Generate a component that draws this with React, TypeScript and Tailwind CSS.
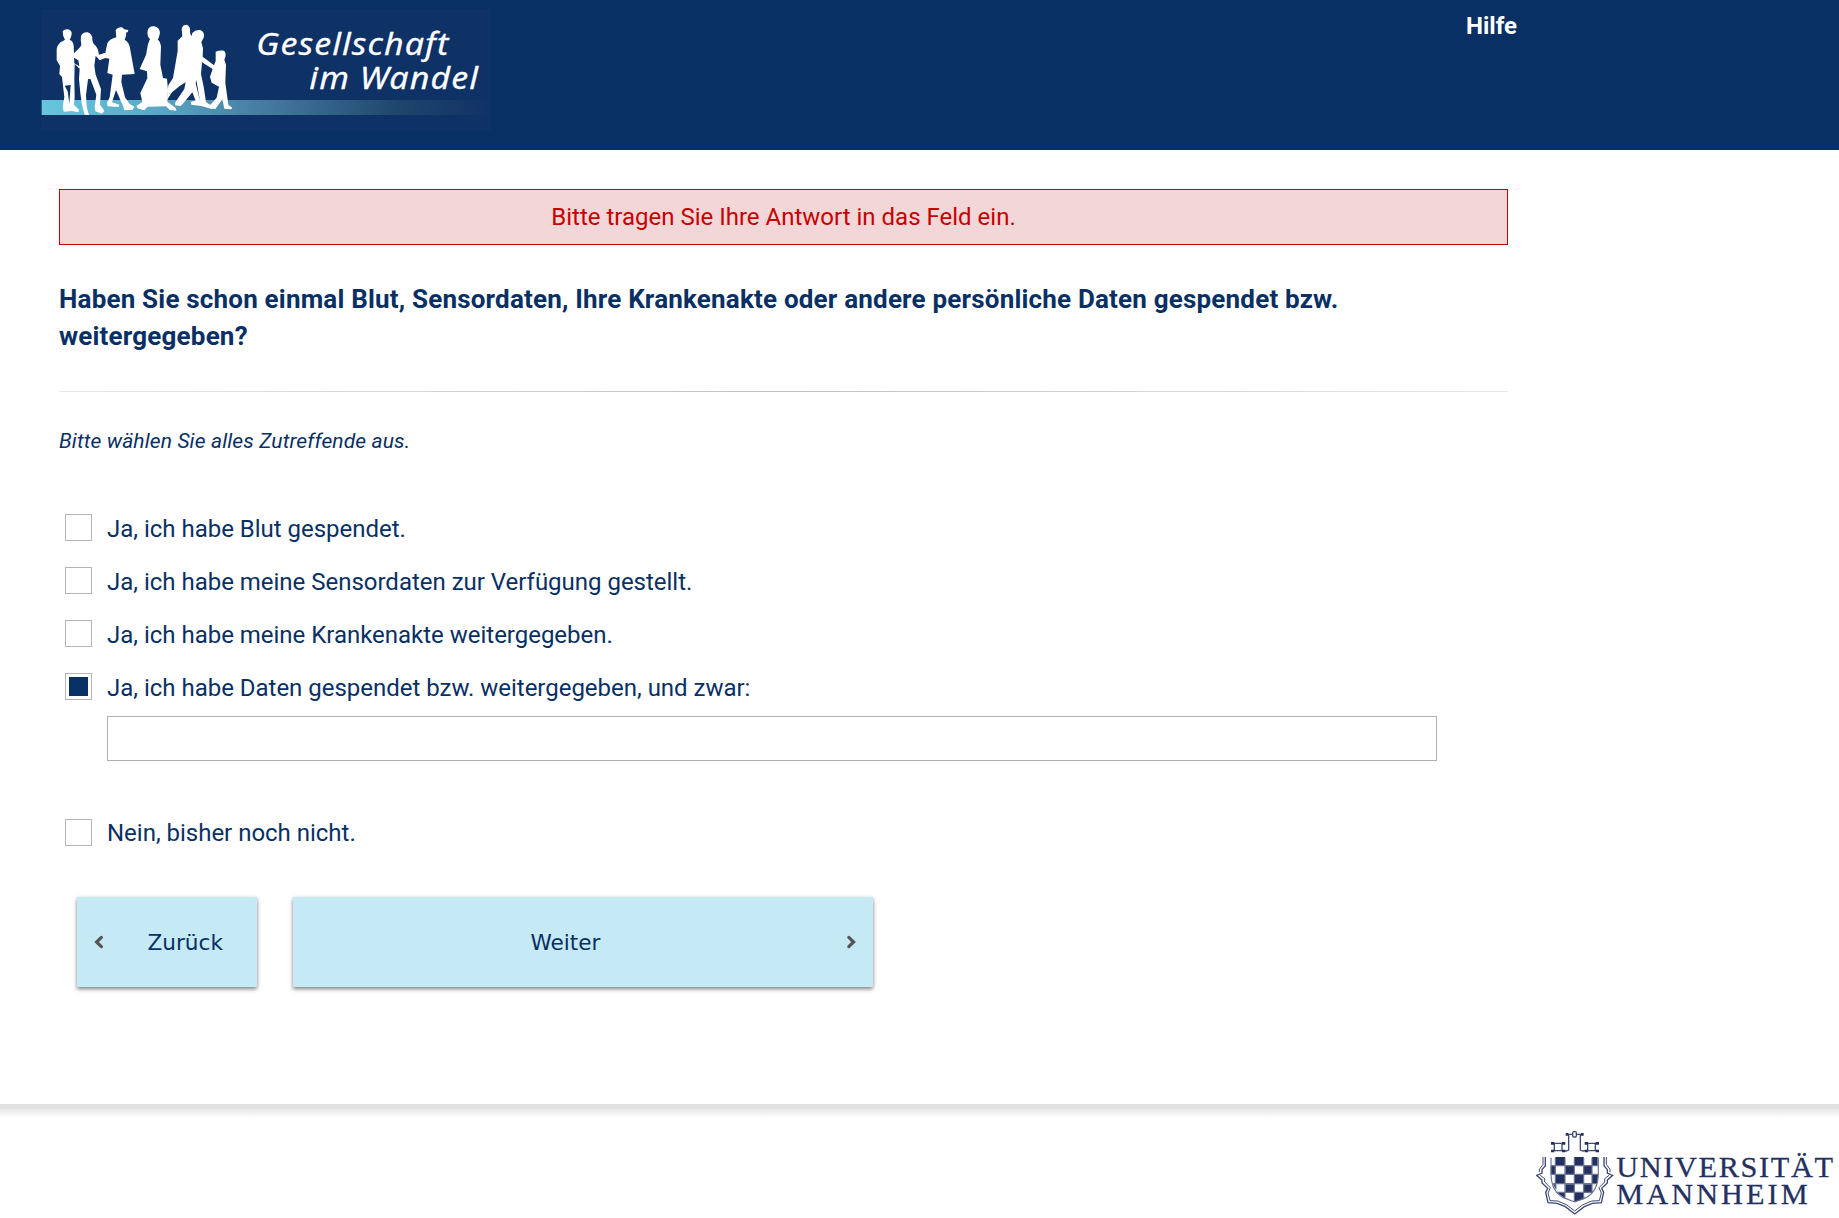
import React from "react";

const options = [
  { label: "Ja, ich habe Blut gespendet.", checked: false },
  { label: "Ja, ich habe meine Sensordaten zur Verfügung gestellt.", checked: false },
  { label: "Ja, ich habe meine Krankenakte weitergegeben.", checked: false },
  { label: "Ja, ich habe Daten gespendet bzw. weitergegeben, und zwar:", checked: true },
];

function Option({ label, checked, compact = false }: { label: string; checked: boolean; compact?: boolean }) {
  return (
    <label className="flex h-[27px] items-start">
      <span className="flex h-[27px] w-[27px] shrink-0 items-center justify-center border border-[#b5b5b5] bg-white">
        {checked && <span className="h-[19px] w-[19px] bg-[#083064]" />}
      </span>
      <span className={`ml-[15px] whitespace-nowrap text-[24px] tracking-[-0.015px] ${compact ? "leading-[28px]" : "leading-[30px]"}`}>
        {label}
      </span>
    </label>
  );
}

function SocietyLogo() {
  return (
    <svg className="block h-[122px] w-[450px]" viewBox="33 27 1350 366" aria-label="Gesellschaft im Wandel">
      <defs>
        <linearGradient id="bar" x1="0" x2="1" y1="0" y2="0">
          <stop offset="0" stopColor="#66c6dd" />
          <stop offset="0.25" stopColor="#5aa9c6" />
          <stop offset="0.5" stopColor="#457a9f" />
          <stop offset="0.8" stopColor="#1e456c" />
          <stop offset="1" stopColor="#103166" />
        </linearGradient>
      </defs>
      <rect x="33" y="27" width="1350" height="366" fill="#0e3166" />
      <rect x="35" y="300" width="1348" height="45" fill="url(#bar)" />
      <g fill="#fff">
        <path d="M98 94Q103 87 114 88Q126 91 125 102Q124 112 119 119Q130 124 131 137L132 160L150 142L154 135Q151 120 153 108Q159 95 173 97Q187 101 187 118Q188 131 194 134Q204 142 207 164L226 158L232 130Q239 117 259 112L257 90Q263 80 277 82L282 88L295 90L293 97L289 97Q289 110 284 119Q298 127 300 145L314 222L276 224L274 246L285 292L299 312L313 320L308 329L283 331L280 320L258 270L246 307L268 314L266 321L233 319L231 309L239 292L248 224L232 219L238 176L226 174L209 181L197 167L193 197L197 224L213 267L210 314L223 332L216 341L196 334L194 321L199 284L181 236L174 238L168 285L170 321L177 345L164 344L156 316L151 279L147 238L149 206L134 192L133 237L134 292L132 314L147 329L145 337L126 333L101 335L98 319L103 292L96 231L88 222L90 197L80 181L80 147Q82 130 99 123L105 119Q98 110 98 94Z" />
        <path d="M353 91Q358 77 373 79Q389 82 390 99L386 114L383 118Q392 126 393 138L391 194L399 234L411 236L414 270L412 305L438 325L439 332L419 330L408 319L354 320L348 325L343 331L323 325L319 318L337 306L331 279L352 235L351 214L329 207L348 165L354 132L360 117Q350 110 353 91Z" />
        <path d="M455 87Q457 74 470 74Q482 79 480 93L481 103L485 108L487 99Q496 88 510 90Q524 95 522 111L514 127L519 145L518 170L552 196L557 183L557 155Q565 151 582 152Q589 158 586 171L583 179L588 194L586 248L595 315L607 323L604 328L583 326L577 298L556 327L540 325L538 318L560 293L567 260L545 248L540 230L548 207L516 187L513 222L521 260L528 306L551 322L545 327L514 318L484 314L482 305L497 302L487 277L463 306L452 318L435 316L436 307L463 267L467 247L449 258L426 277L411 300L415 256L429 234L443 153L443 122L457 109Z" />
      </g>
      <path d="M104 257L113 274L118 311L122 255ZM132 173L133 190L148 199L145 181ZM497 250L510 304L499 240Z" fill="#0e3166" />
      <g fill="#fff" stroke="#fff" strokeWidth="0.8" fontFamily="'Noto Sans', sans-serif" fontStyle="italic" fontSize="95" letterSpacing="3">
        <text x="679" y="165" textLength="579" lengthAdjust="spacingAndGlyphs">Gesellschaft</text>
        <text x="838" y="268" textLength="509" lengthAdjust="spacingAndGlyphs">im Wandel</text>
      </g>
    </svg>
  );
}

function UniversityLogo() {
  return (
    <svg className="block h-[88px] w-[303px]" viewBox="48 117 909 264" aria-label="Universität Mannheim">
      <g fill="none" stroke="#3e4974" strokeWidth="4">
        <path d="M96 160H132M96 182H136M103 160V182M126 160V182M197 160H233M190 182H233M203 160V182M226 160V182M141 133H187M146 133V180L136 184M181 133V180L191 184" />
        <rect x="158" y="125" width="11" height="16" rx="4" fill="#fff" />
        <path d="M76 201V227L66 239V249L50 256L66 270V279L83 295L77 307L84 338L111 340L136 350L164 372L193 350L217 340L244 338L251 307L245 295L262 279V270L278 256L262 249V239L252 227V201" />
        <path d="M69 201V223L58 238V246M90 332L113 333L141 345L164 363L187 345L215 333L238 332L244 309L237 293L254 276V266L267 256M90 332L84 309L91 293L74 276V266L61 256M259 201V223L270 238V246" strokeWidth="3" />
      </g>
      <g fill="#24305f">
        <path d="M93 156h10v8h-10zM126 156h10v8h-10zM93 179h10v8h-10zM126 179h10v8h-10zM194 156h10v8h-10zM227 156h10v8h-10zM194 179h10v8h-10zM227 179h10v8h-10zM137 129h8v8h-8zM183 129h8v8h-8z" />
        <path d="M106 201H135V226H106ZM163 201H191V226H163ZM216 201H233V226H216ZM92 228H106V252H92ZM136 228H163V252H136ZM191 228H216V252H191ZM106 255H135V279H106ZM163 255H191V279H163ZM216 255H234L232 279H216ZM99 283H109V299ZM136 283H163V306H136ZM191 283H216V306H191ZM113 309H135V325ZM163 309H191V328L163 336Z" />
      </g>
      <path d="M93 203V252Q94 304 130 323L164 336L198 323Q234 304 235 252V203M93 227H235M93 253H235M99 281H230M110 307H218M106 203V292M135 203V323M163 203V334M191 203V323M216 203V307" fill="none" stroke="#6b7495" strokeWidth="3.5" />
      <g fill="#24305f" stroke="#24305f" strokeWidth="0.8" fontFamily="'Liberation Serif', serif" fontSize="91">
        <text x="289" y="262" textLength="650">UNIVERSITÄT</text>
        <text x="289" y="342" textLength="574">MANNHEIM</text>
      </g>
    </svg>
  );
}

function Chevron({ left = false }: { left?: boolean }) {
  return (
    <svg className="h-[14px] w-[10px]" viewBox="0 0 10 14" fill="none" stroke="#555" strokeWidth="3.2" strokeLinecap="round">
      <path d={left ? "M7.4 2.4L2.6 7L7.4 11.6" : "M2.8 2.4L7.6 7L2.8 11.6"} />
    </svg>
  );
}

export default function App() {
  return (
    <div className="flex h-[1218px] w-full flex-col overflow-hidden bg-white font-['Roboto',sans-serif] text-[#083064]">
      <header className="flex h-[150px] shrink-0 items-start bg-[#083064] pt-[9px] pl-[41px]">
        <SocietyLogo />
        <a className="ml-[975px] text-[24px] leading-[34px] font-bold text-white">Hilfe</a>
      </header>
      <main className="ml-[59px] flex h-[954px] w-[1449px] shrink-0 flex-col pt-[39px]">
        <div className="flex h-[56px] items-center justify-center border border-[#c80000] bg-[#f3d7d8] text-[24px] text-[#c80000]">
          Bitte tragen Sie Ihre Antwort in das Feld ein.
        </div>
        <h1 className="mt-[36px] text-[26px] leading-[37px] font-bold tracking-[0.19px]">
          Haben Sie schon einmal Blut, Sensordaten, Ihre Krankenakte oder andere persönliche Daten gespendet bzw.
          <br />
          weitergegeben?
        </h1>
        <div className="mt-[36px] h-px shrink-0 bg-linear-to-r from-[#e8e8e8] via-[#bdc0c2] to-[#e8e8e8]" />
        <p className="mt-[33px] text-[21px] leading-[32px] italic tracking-[0.13px]">Bitte wählen Sie alles Zutreffende aus.</p>
        <div className="mt-[57px] ml-[6px] flex flex-col gap-[26px]">
          {options.map((o) => (
            <Option key={o.label} label={o.label} checked={o.checked} />
          ))}
        </div>
        <input className="mt-[16px] ml-[48px] h-[45px] w-[1330px] shrink-0 border border-[#b0b0b0] bg-white" />
        <div className="mt-[58px] ml-[6px]">
          <Option label="Nein, bisher noch nicht." checked={false} compact />
        </div>
        <div className="mt-[51px] ml-[18px] flex gap-[36px] font-['DejaVu_Sans',sans-serif] text-[21.6px]">
          <button className="flex h-[90px] w-[180px] items-center bg-[#c5e9f5] pl-[17px] shadow-[0_2px_4px_rgba(0,0,0,0.5)]">
            <Chevron left />
            <span className="ml-[43.5px] pt-[2px]">Zurück</span>
          </button>
          <button className="flex h-[90px] w-[580px] items-center bg-[#c5e9f5] pr-[17px] shadow-[0_2px_4px_rgba(0,0,0,0.5)]">
            <span className="ml-[237.5px] pt-[2px]">Weiter</span>
            <span className="ml-auto">
              <Chevron />
            </span>
          </button>
        </div>
      </main>
      <footer className="flex h-[114px] shrink-0 flex-col">
        <div className="h-[5px] bg-[#e1e1e1]" />
        <div className="h-[9px] bg-linear-to-b from-[#e8e8e8] to-white" />
        <div className="mt-[11px] ml-[1536px]">
          <UniversityLogo />
        </div>
      </footer>
    </div>
  );
}
